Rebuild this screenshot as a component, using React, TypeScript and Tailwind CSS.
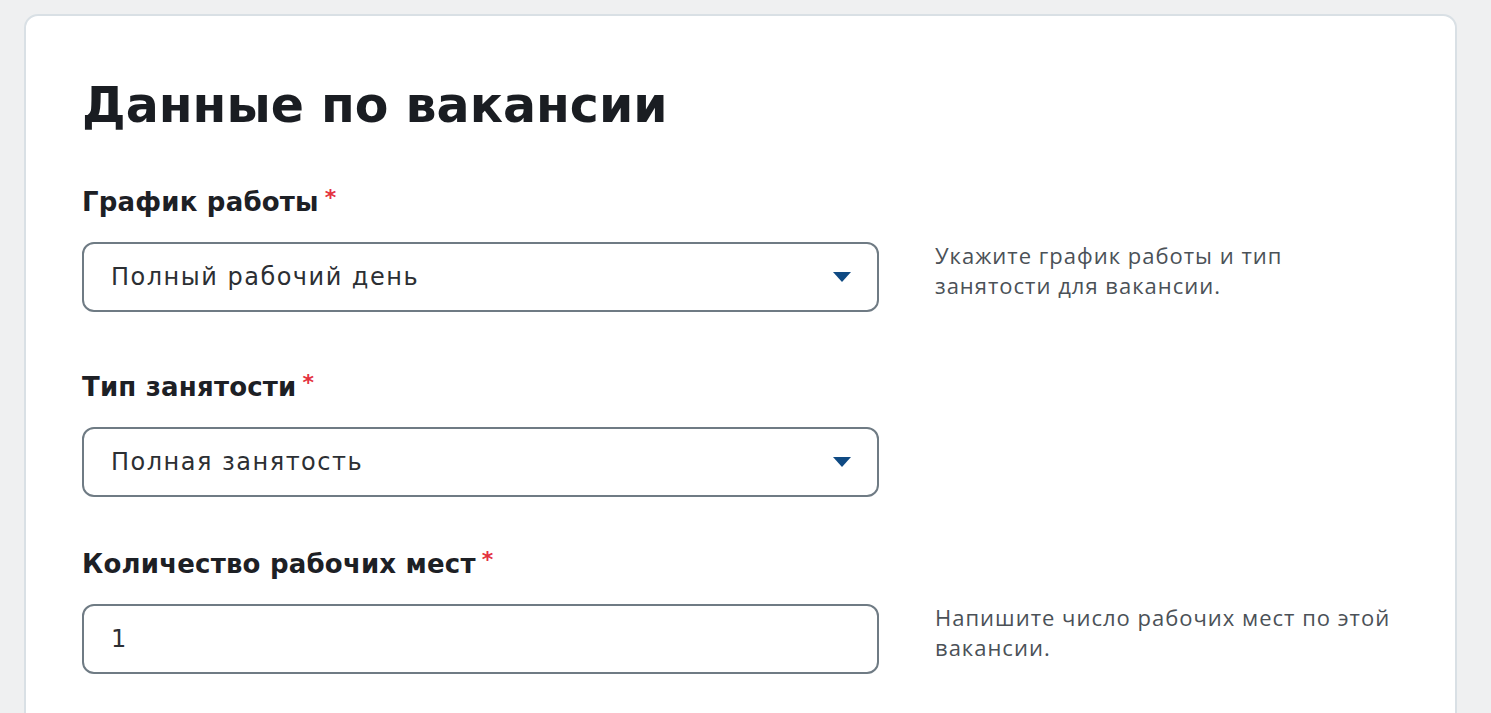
import React from "react";

const heading = { fontFamily: '"DejaVu Sans", "Noto Sans", sans-serif' };
const hintFont = { fontFamily: '"Open Sans", "Noto Sans", sans-serif' };

interface FieldProps {
  label: string;
  value: string;
  select?: boolean;
  hint?: string[];
  className?: string;
}

const Field: React.FC<FieldProps> = ({ label, value, select = false, hint, className = "" }) => (
  <div className={`flex flex-col ${className}`}>
    <div style={heading} className="text-[26px] font-semibold text-[#1d2025] leading-[32px] h-[32px] tracking-[0.2px]">
      {label}
      <span className="text-[#e4323f] text-[22px] align-top ml-[6px] leading-[24px]">*</span>
    </div>
    <div className="flex items-start mt-[24px]">
      <div className="w-[797px] h-[70px] rounded-[12px] border-2 border-[#6f7b84] flex items-center justify-between pl-[27px] pr-[25px] shrink-0">
        <span style={heading} className="text-[24px] tracking-[1.5px] text-[#2c2f33]">{value}</span>
        {select && (
          <svg width="20" height="12" viewBox="0 0 20 12">
            <path d="M1 1 H19 L10 11 Z" fill="#0f4a83" />
          </svg>
        )}
      </div>
      {hint && (
        <div style={hintFont} className="ml-[56px] -mt-[2px] text-[22px] leading-[30px] tracking-[1px] text-[#4b5157] w-[500px]">
          {hint.map((l) => (
            <div key={l}>{l}</div>
          ))}
        </div>
      )}
    </div>
  </div>
);

export default function App() {
  return (
    <div className="w-[1491px] h-[713px] bg-[#eff0f1] overflow-hidden pt-[14px] pl-[24px] pr-[34px]">
      <div className="bg-white border-2 border-[#d9e0e5] rounded-[14px] h-[740px] pl-[56px] pt-[62px]">
        <h1 style={heading} className="text-[49px] font-semibold text-[#1a1d22] leading-[56px] h-[56px]">
          Данные по вакансии
        </h1>
        <div className="flex flex-col mt-[52px]">
          <Field
            label="График работы"
            value="Полный рабочий день"
            select
            hint={["Укажите график работы и тип", "занятости для вакансии."]}
          />
          <Field label="Тип занятости" value="Полная занятость" select className="mt-[59px]" />
          <Field
            label="Количество рабочих мест"
            value="1"
            className="mt-[51px]"
            hint={["Напишите число рабочих мест по этой", "вакансии."]}
          />
        </div>
      </div>
    </div>
  );
}
